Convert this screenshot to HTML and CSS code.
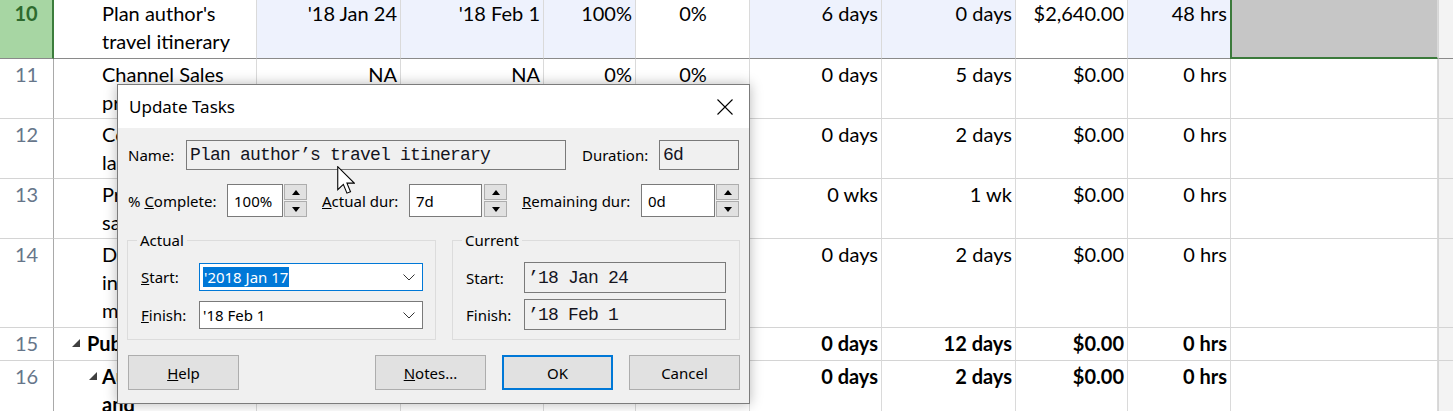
FILE: index.html
```html
<!DOCTYPE html>
<html lang="en">
<head>
<meta charset="utf-8">
<title>Update Tasks</title>
<link rel="stylesheet" href="styles.css">
</head>
<body>
<div class="sheet">
  <div class="row r10 h61">
    <div class="num">10</div>
    <div class="name">Plan author's<br>travel itinerary</div>
    <div class="hl">'18 Jan 24</div>
    <div class="hl">'18 Feb 1</div>
    <div class="hl">100%</div>
    <div class="ctr">0%</div>
    <div class="hl">6 days</div>
    <div class="hl">0 days</div>
    <div>$2,640.00</div>
    <div class="hl">48 hrs</div>
    <div class="sel"></div>
    <div class="strip"></div>
  </div>
  <div class="row h60">
    <div class="num">11</div>
    <div class="name">Channel Sales<br>presentation</div>
    <div>NA</div>
    <div>NA</div>
    <div>0%</div>
    <div class="ctr">0%</div>
    <div>0 days</div>
    <div>5 days</div>
    <div>$0.00</div>
    <div>0 hrs</div>
    <div></div>
    <div class="strip"></div>
  </div>
  <div class="row h60">
    <div class="num">12</div>
    <div class="name">Coordinate<br>launch</div>
    <div>'18 Jan 26</div>
    <div>'18 Jan 29</div>
    <div>0%</div>
    <div class="ctr">0%</div>
    <div>0 days</div>
    <div>2 days</div>
    <div>$0.00</div>
    <div>0 hrs</div>
    <div></div>
    <div class="strip"></div>
  </div>
  <div class="row h60">
    <div class="num">13</div>
    <div class="name">Prepare<br>sales kits</div>
    <div>'18 Jan 29</div>
    <div>'18 Feb 2</div>
    <div>0%</div>
    <div class="ctr">0%</div>
    <div>0 wks</div>
    <div>1 wk</div>
    <div>$0.00</div>
    <div>0 hrs</div>
    <div></div>
    <div class="strip"></div>
  </div>
  <div class="row h89">
    <div class="num">14</div>
    <div class="name">Distribute<br>information<br>materials</div>
    <div>'18 Feb 5</div>
    <div>'18 Feb 6</div>
    <div>0%</div>
    <div class="ctr">0%</div>
    <div>0 days</div>
    <div>2 days</div>
    <div>$0.00</div>
    <div>0 hrs</div>
    <div></div>
    <div class="strip"></div>
  </div>
  <div class="row h33 bold">
    <div class="num">15</div>
    <div class="name sum1"><i class="tri"></i><span>Publicity</span></div>
    <div>'18 Jan 15</div>
    <div>'18 Feb 6</div>
    <div>0%</div>
    <div class="ctr">0%</div>
    <div>0 days</div>
    <div>12 days</div>
    <div>$0.00</div>
    <div>0 hrs</div>
    <div></div>
    <div class="strip"></div>
  </div>
  <div class="row h89 bold">
    <div class="num">16</div>
    <div class="name sum2"><i class="tri"></i><span>Author tour<br>and<br>readings</span></div>
    <div>'18 Feb 7</div>
    <div>'18 Feb 8</div>
    <div>0%</div>
    <div class="ctr">0%</div>
    <div>0 days</div>
    <div>2 days</div>
    <div>$0.00</div>
    <div>0 hrs</div>
    <div></div>
    <div class="strip"></div>
  </div>
</div>

<div class="dlg">
  <div class="tbar">
    <span>Update Tasks</span>
    <svg class="xbtn" width="16" height="16" viewBox="0 0 16 16"><path d="M0.5 0.5 L15.5 15.5 M15.5 0.5 L0.5 15.5" stroke="#000" stroke-width="1.1" fill="none"/></svg>
  </div>
  <div class="dbody">
    <div class="frow1">
      <span class="l-name">Name:</span>
      <div class="ro name-f">Plan author’s travel itinerary</div>
      <span class="l-dur">Duration:</span>
      <div class="ro dur-f">6d</div>
    </div>
    <div class="frow2">
      <span class="l-pc">% <u>C</u>omplete:</span>
      <div class="inp w56">100%</div>
      <div class="spin s1"><b><i class="up"></i></b><b><i class="dn"></i></b></div>
      <span class="l-ad"><u>A</u>ctual dur:</span>
      <div class="inp w73">7d</div>
      <div class="spin s2"><b><i class="up"></i></b><b><i class="dn"></i></b></div>
      <span class="l-rd"><u>R</u>emaining dur:</span>
      <div class="inp w74">0d</div>
      <div class="spin s1"><b><i class="up"></i></b><b><i class="dn"></i></b></div>
    </div>
    <div class="groups">
      <fieldset class="grp g-act">
        <legend>Actual</legend>
        <div class="grow"><span class="gl"><u>S</u>tart:</span><div class="combo focus"><span class="seltext">'2018 Jan 17</span><svg width="12" height="7" viewBox="0 0 12 7"><polyline points="0.5,0.5 6,6 11.5,0.5" fill="none" stroke="#333" stroke-width="1"/></svg></div></div>
        <div class="grow gap10"><span class="gl"><u>F</u>inish:</span><div class="combo"><span>'18 Feb 1</span><svg width="12" height="7" viewBox="0 0 12 7"><polyline points="0.5,0.5 6,6 11.5,0.5" fill="none" stroke="#333" stroke-width="1"/></svg></div></div>
      </fieldset>
      <fieldset class="grp g-cur">
        <legend>Current</legend>
        <div class="grow"><span class="gl">Start:</span><div class="ro cur-f">’18 Jan 24</div></div>
        <div class="grow gap6"><span class="gl">Finish:</span><div class="ro cur-f">’18 Feb 1</div></div>
      </fieldset>
    </div>
    <div class="btns">
      <button class="btn"><u>H</u>elp</button>
      <button class="btn push"><u>N</u>otes...</button>
      <button class="btn ok">OK</button>
      <button class="btn">Cancel</button>
    </div>
  </div>
</div>

<svg class="cursor" width="18" height="28" viewBox="0 0 12.5 19.5"><path d="M0.5 0.5 V16.5 L4.4 12.8 L6.9 18.9 L9.4 17.9 L6.9 11.9 H12 Z" fill="#fff" stroke="#000" stroke-width="0.75"/></svg>
</body>
</html>
```

FILE: styles.css
```css
* { box-sizing: border-box; }
html, body { margin: 0; height: 100%; overflow: hidden; background: #fff; }
body {
  position: relative;
  font-family: Lato, "Noto Sans", sans-serif;
  font-size: 20px;
  color: #000;
}

/* ---------- sheet ---------- */
.sheet { margin-top: -2px; }
.row {
  display: grid;
  grid-template-columns: 54px 203px 144px 143px 92px 114px 132px 134px 112px 103px 207px 1fr;
}
.row > div {
  border-right: 1px solid #dadada;
  border-bottom: 1px solid #d4d4d4;
  padding: 1px 3px 0 4px;
  line-height: 28px;
  text-align: right;
  white-space: nowrap;
  overflow: hidden;
}
.h61 { height: 61px; }
.h60 { height: 60px; }
.h89 { height: 89px; }
.h33 { height: 33px; }
.bold { font-weight: bold; }

.row > .num {
  text-align: center;
  color: #66768a;
  font-weight: normal;
  border-right-color: #a9a9a9;
  padding: 1px 0 0 0;
}
.row > .name { text-align: left; padding-left: 48px; }
.row > .ctr { text-align: center; }
.row > .hl { background: #eef2fd; }
.row > .strip { background: #f3f3f3; border-right: 0; border-left: 1px solid #d6d6d6; }

.r10 > div { border-bottom-color: #8a8a8a; }
.r10 > .num {
  background: #a7d6a3;
  color: #2e6a2e;
  font-weight: bold;
  border-right: 2px solid #3c7d3c;
}
.r10 > .sel {
  background: #c6c6c6;
  border-bottom: 2px solid #3b7a3b;
  box-shadow: -1px 0 0 #3b7a3b, inset 1px 0 0 #3b7a3b;
}

.name.sum1, .name.sum2 { display: flex; align-items: flex-start; }
.name.sum1 { padding-left: 18px; }
.name.sum2 { padding-left: 35px; }
.tri {
  display: block;
  width: 0; height: 0;
  border-left: 8px solid transparent;
  border-bottom: 8px solid #404040;
  margin-top: 10px;
}
.sum1 .tri { margin-right: 7px; }
.sum2 .tri { margin-right: 5px; }

/* ---------- dialog ---------- */
.dlg {
  position: absolute;
  left: 117px;
  top: 84px;
  width: 633px;
  height: 320px;
  border: 1px solid #7c7c7c;
  background: #f0f0f0;
  box-shadow: 0 0 12px rgba(0, 0, 0, 0.28);
  font-family: "Noto Sans", sans-serif;
  font-size: 15px;
  color: #000;
  display: flex;
  flex-direction: column;
}
.tbar {
  height: 43px;
  background: #fff;
  display: flex;
  align-items: center;
  justify-content: space-between;
  padding: 0 16px 0 11px;
  font-size: 17px;
}
.xbtn { display: block; }
.dbody { padding: 12px 9px 0 10px; }

.frow1, .frow2 { display: flex; align-items: center; }
.frow1 { height: 30px; }
.frow2 { height: 33px; margin-top: 14px; }

.ro {
  border: 1px solid #7a7a7a;
  background: #f0f0f0;
  font-family: "Liberation Mono", "DejaVu Sans Mono", monospace;
  font-size: 18px;
  letter-spacing: -0.8px;
  color: #14141e;
  display: flex;
  align-items: center;
  padding-left: 3px;
  white-space: nowrap;
}
.l-name { width: 58px; }
.name-f { width: 380px; height: 30px; }
.l-dur { margin-left: 16px; width: 77px; }
.dur-f { width: 80px; height: 30px; }

.inp {
  height: 33px;
  border: 1px solid #7a7a7a;
  background: #fff;
  padding-left: 6px;
  display: flex;
  align-items: center;
}
.w56 { width: 56px; }
.w73 { width: 73px; }
.w74 { width: 74px; }
.l-pc { width: 99px; }
.l-ad { margin-left: 15px; width: 87px; }
.l-rd { margin-left: 15px; width: 119px; }

.spin { display: flex; flex-direction: column; gap: 1px; width: 23px; height: 33px; }
.spin.s1 { margin-left: 1px; }
.spin.s2 { margin-left: 2px; }
.spin b {
  height: 16px;
  border: 1px solid #adadad;
  background: #e1e1e1;
  display: flex;
  align-items: center;
  justify-content: center;
}
.up, .dn { display: block; width: 0; height: 0; border-left: 4.5px solid transparent; border-right: 4.5px solid transparent; }
.up { border-bottom: 5px solid #000; }
.dn { border-top: 5px solid #000; }

.groups { display: flex; gap: 16px; margin: 13px 0 0 -1px; }
.grp {
  margin: 0;
  padding: 0 0 10px 13px;
  border: 1px solid #dcdcdc;
  min-width: 0;
}
.grp legend { margin-left: -4px; padding: 0 3px; line-height: 20px; }
.g-act { width: 309px; padding-top: 13px; }
.g-cur { width: 288px; padding-top: 12px; padding-bottom: 9px; }
.grow { display: flex; align-items: center; }
.gap10 { margin-top: 10px; }
.gap6 { margin-top: 6px; }
.gl { width: 58px; }

.combo {
  width: 224px;
  height: 28px;
  border: 1px solid #7a7a7a;
  background: #fff;
  display: flex;
  align-items: center;
  justify-content: space-between;
  padding: 0 7px 0 3px;
}
.combo.focus { border-color: #0078d7; }
.seltext { background: #0078d7; color: #fff; line-height: 20px; padding: 0 1px; }
.combo svg { display: block; }
.cur-f { width: 202px; height: 31px; }

.btns { display: flex; gap: 16px; margin-top: 15px; }
.btn {
  width: 111px;
  height: 35px;
  border: 1px solid #adadad;
  background: #e1e1e1;
  font: inherit;
  color: #000;
  padding: 0;
}
.btn.push { margin-left: auto; }
.btn.ok { border: 2px solid #0078d7; }

.cursor { position: absolute; left: 337px; top: 166px; display: block; }
```
